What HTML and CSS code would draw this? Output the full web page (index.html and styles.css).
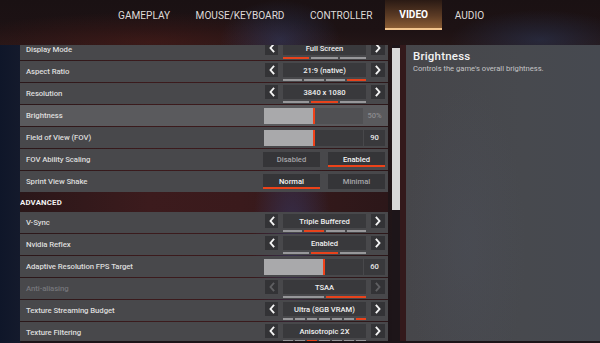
FILE: index.html
```html
<!DOCTYPE html>
<html lang="en">
<head>
<meta charset="utf-8">
<title>Video Settings</title>
<link rel="stylesheet" href="styles.css">
</head>
<body>
<div class="screen">
  <nav class="tabs">
    <div class="tab">GAMEPLAY</div>
    <div class="tab">MOUSE/KEYBOARD</div>
    <div class="tab">CONTROLLER</div>
    <div class="tab active">VIDEO</div>
    <div class="tab">AUDIO</div>
  </nav>
  <main class="main">
    <div class="list">
      <div class="list-inner">
        <div class="row">
          <span class="label">Display Mode</span>
          <div class="selector">
            <div class="arrow"><svg viewBox="0 0 8 10"><polyline points="5.5,1.5 2.5,5 5.5,8.5"/></svg></div>
            <div class="choice"><div class="value">Full Screen</div><div class="segs"><i class="on"></i><i></i><i></i></div></div>
            <div class="arrow"><svg viewBox="0 0 8 10"><polyline points="2.5,1.5 5.5,5 2.5,8.5"/></svg></div>
          </div>
        </div>
        <div class="row">
          <span class="label">Aspect Ratio</span>
          <div class="selector">
            <div class="arrow"><svg viewBox="0 0 8 10"><polyline points="5.5,1.5 2.5,5 5.5,8.5"/></svg></div>
            <div class="choice"><div class="value">21:9 (native)</div><div class="segs"><i></i><i></i><i></i><i class="on"></i></div></div>
            <div class="arrow"><svg viewBox="0 0 8 10"><polyline points="2.5,1.5 5.5,5 2.5,8.5"/></svg></div>
          </div>
        </div>
        <div class="row">
          <span class="label">Resolution</span>
          <div class="selector">
            <div class="arrow"><svg viewBox="0 0 8 10"><polyline points="5.5,1.5 2.5,5 5.5,8.5"/></svg></div>
            <div class="choice"><div class="value">3840 x 1080</div><div class="segs"><i></i><i class="on"></i><i></i></div></div>
            <div class="arrow"><svg viewBox="0 0 8 10"><polyline points="2.5,1.5 5.5,5 2.5,8.5"/></svg></div>
          </div>
        </div>
        <div class="row selected">
          <span class="label">Brightness</span>
          <div class="slider-wrap">
            <div class="slider"><div class="fill" style="width:49px"></div><div class="knob"></div></div>
            <div class="num dim">50%</div>
          </div>
        </div>
        <div class="row">
          <span class="label">Field of View (FOV)</span>
          <div class="slider-wrap">
            <div class="slider"><div class="fill" style="width:49px"></div><div class="knob"></div></div>
            <div class="num boxed">90</div>
          </div>
        </div>
        <div class="row">
          <span class="label">FOV Ability Scaling</span>
          <div class="toggle">
            <div class="opt">Disabled</div>
            <div class="opt on">Enabled</div>
          </div>
        </div>
        <div class="row">
          <span class="label">Sprint View Shake</span>
          <div class="toggle">
            <div class="opt on">Normal</div>
            <div class="opt">Minimal</div>
          </div>
        </div>
        <div class="section">ADVANCED</div>
        <div class="row">
          <span class="label">V-Sync</span>
          <div class="selector">
            <div class="arrow"><svg viewBox="0 0 8 10"><polyline points="5.5,1.5 2.5,5 5.5,8.5"/></svg></div>
            <div class="choice"><div class="value">Triple Buffered</div><div class="segs"><i></i><i class="on"></i><i></i><i></i></div></div>
            <div class="arrow"><svg viewBox="0 0 8 10"><polyline points="2.5,1.5 5.5,5 2.5,8.5"/></svg></div>
          </div>
        </div>
        <div class="row">
          <span class="label">Nvidia Reflex</span>
          <div class="selector">
            <div class="arrow"><svg viewBox="0 0 8 10"><polyline points="5.5,1.5 2.5,5 5.5,8.5"/></svg></div>
            <div class="choice"><div class="value">Enabled</div><div class="segs"><i></i><i class="on"></i><i></i></div></div>
            <div class="arrow"><svg viewBox="0 0 8 10"><polyline points="2.5,1.5 5.5,5 2.5,8.5"/></svg></div>
          </div>
        </div>
        <div class="row">
          <span class="label">Adaptive Resolution FPS Target</span>
          <div class="slider-wrap">
            <div class="slider"><div class="fill" style="width:59px"></div><div class="knob"></div></div>
            <div class="num boxed">60</div>
          </div>
        </div>
        <div class="row">
          <span class="label disabled">Anti-aliasing</span>
          <div class="selector">
            <div class="arrow off"><svg viewBox="0 0 8 10"><polyline points="5.5,1.5 2.5,5 5.5,8.5"/></svg></div>
            <div class="choice"><div class="value">TSAA</div><div class="segs"><i></i><i class="on"></i></div></div>
            <div class="arrow off"><svg viewBox="0 0 8 10"><polyline points="2.5,1.5 5.5,5 2.5,8.5"/></svg></div>
          </div>
        </div>
        <div class="row">
          <span class="label">Texture Streaming Budget</span>
          <div class="selector">
            <div class="arrow"><svg viewBox="0 0 8 10"><polyline points="5.5,1.5 2.5,5 5.5,8.5"/></svg></div>
            <div class="choice"><div class="value">Ultra (8GB VRAM)</div><div class="segs"><i></i><i></i><i></i><i></i><i></i><i></i><i class="on"></i></div></div>
            <div class="arrow"><svg viewBox="0 0 8 10"><polyline points="2.5,1.5 5.5,5 2.5,8.5"/></svg></div>
          </div>
        </div>
        <div class="row">
          <span class="label">Texture Filtering</span>
          <div class="selector">
            <div class="arrow"><svg viewBox="0 0 8 10"><polyline points="5.5,1.5 2.5,5 5.5,8.5"/></svg></div>
            <div class="choice"><div class="value">Anisotropic 2X</div><div class="segs"><i></i><i></i><i class="on"></i><i></i><i></i><i></i><i></i></div></div>
            <div class="arrow"><svg viewBox="0 0 8 10"><polyline points="2.5,1.5 5.5,5 2.5,8.5"/></svg></div>
          </div>
        </div>
      </div>
    </div>
    <div class="scrollbar"><div class="thumb"></div></div>
    <aside class="info">
      <h1 class="info-title">Brightness</h1>
      <p class="info-desc">Controls the game's overall brightness.</p>
    </aside>
  </main>
</div>
</body>
</html>
```

FILE: styles.css
```css
* { box-sizing: border-box; }
html, body { margin: 0; padding: 0; }
body {
  width: 600px;
  height: 343px;
  overflow: hidden;
  font-family: Roboto, "Liberation Sans", sans-serif;
  background: #140f12;
}
.screen {
  width: 600px;
  height: 343px;
  display: flex;
  flex-direction: column;
  background:
    radial-gradient(ellipse 60px 40px at 280px 40px, rgba(50,70,120,0.45), transparent),
    radial-gradient(ellipse 90px 30px at 540px 40px, rgba(45,60,95,0.5), transparent),
    radial-gradient(ellipse 200px 30px at 150px 42px, rgba(90,30,25,0.45), transparent),
    linear-gradient(to bottom, #1a1113 0px, #1d1214 30px, #241617 45px, #1c1418 100%);
}
.tabs {
  height: 45px;
  flex: none;
  display: flex;
  align-items: flex-start;
  padding-left: 105.25px;
}
.tab {
  height: 30px;
  padding: 0 12.75px;
  display: flex;
  align-items: center;
  font-size: 10.1px;
  letter-spacing: 0;
  color: #dedad8;
}
.tab.active {
  color: #fff;
  font-weight: 700;
  padding: 0 14px;
  background: linear-gradient(to bottom, #2a1a14 0%, #5a3a24 55%, #8a5c34 100%);
  border-bottom: 2px solid #f3c58e;
}
.main {
  flex: 1;
  display: flex;
  height: 296px;
  background: linear-gradient(to right, #0f1629 0px, #141a2c 20px, transparent 21px);
}
.list {
  margin-left: 20px;
  width: 368px;
  height: 296px;
  overflow: hidden;
  background:
    radial-gradient(ellipse 40px 120px at 272px 200px, rgba(55,70,130,0.5), transparent),
    linear-gradient(to right, #2a1719 0%, #3c1b1d 35%, #3a1a1c 60%, #2c1719 100%);
}
.list-inner {
  margin-top: -6px;
  display: flex;
  flex-direction: column;
}
.row {
  height: 21px;
  margin-bottom: 1px;
  flex: none;
  display: flex;
  align-items: center;
  justify-content: space-between;
  padding: 0 3px 0 6px;
  background: #48484b;
}
.row.selected { background: #5a5a5d; }
.label {
  font-size: 7.8px;
  font-weight: 500;
  color: #dcdcdc;
  letter-spacing: -0.1px;
}
.label.disabled { color: #75757a; }
.section {
  height: 18px;
  margin-bottom: 1px;
  flex: none;
  display: flex;
  align-items: center;
  font-size: 7.8px;
  font-weight: 700;
  color: #f2f2f2;
  letter-spacing: 0.2px;
}
.selector {
  display: flex;
  align-items: flex-start;
  gap: 5px;
  width: 120px;
  height: 18px;
  margin-top: 1px;
}
.arrow {
  width: 14px;
  height: 14px;
  background: #333336;
  display: flex;
  align-items: center;
  justify-content: center;
}
.arrow:first-child { width: 13px; }
.arrow svg {
  width: 8px;
  height: 10px;
  fill: none;
  stroke: #f4f4f4;
  stroke-width: 1.9;
  stroke-linecap: square;
}
.arrow.off svg { stroke: #5f5f62; }
.choice {
  width: 83px;
  display: flex;
  flex-direction: column;
  gap: 2px;
}
.value {
  height: 14px;
  background: #39393c;
  color: #f0f0f0;
  font-size: 7.6px;
  font-weight: 500;
  display: flex;
  align-items: center;
  justify-content: center;
}
.segs {
  display: flex;
  gap: 2px;
  height: 2px;
}
.segs i {
  flex: 1;
  background: #97979a;
}
.segs i.on { background: #e8431c; }
.slider-wrap {
  display: flex;
  align-items: center;
  gap: 1px;
  width: 121px;
}
.slider {
  width: 99px;
  height: 16px;
  background: #3a3a3d;
  display: flex;
}
.selected .slider { background: #505053; }
.fill { background: #a9a9ab; height: 100%; }
.knob { width: 2px; height: 100%; background: #f0421a; }
.num {
  width: 21px;
  height: 16px;
  font-size: 7.6px;
  font-weight: 500;
  display: flex;
  align-items: center;
  justify-content: center;
  color: #e8e8e8;
}
.num.dim { color: #8c8c8f; }
.num.boxed { background: #39393c; }
.toggle {
  display: flex;
  gap: 8px;
  width: 122px;
}
.opt {
  width: 57px;
  height: 15px;
  background: #353538;
  color: #a5a5a8;
  font-size: 7.6px;
  font-weight: 500;
  display: flex;
  align-items: center;
  justify-content: center;
  border-bottom: 2px solid transparent;
  padding-top: 1px;
}
.opt.on {
  color: #f4f4f4;
  border-bottom-color: #ec4219;
}
.scrollbar {
  margin-left: 4px;
  width: 8px;
  height: 296px;
  background: #1d1519;
  padding-top: 3px;
}
.thumb {
  height: 162px;
  background: #d8d8d8;
}
.info {
  margin-left: 6px;
  flex: 1;
  height: 296px;
  padding: 4px 7px;
  background:
    radial-gradient(ellipse 60px 160px at 60px 200px, rgba(80,85,100,0.25), transparent),
    linear-gradient(to right, #46464a 0%, #47494e 60%, #464950 100%);
  box-shadow: -6px 0 0 #33191b;
}
.info-title {
  margin: 0;
  font-size: 11.5px;
  font-weight: 500;
  color: #f2f2f2;
  line-height: 14px;
  letter-spacing: 0.2px;
}
.info-desc {
  margin: 1px 0 0;
  font-size: 7.6px;
  color: #c4c4c6;
}
```
